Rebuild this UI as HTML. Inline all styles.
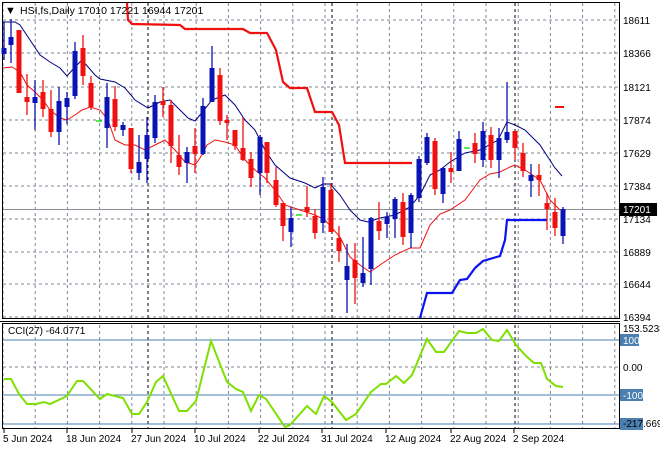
<!DOCTYPE html>
<html><head><meta charset="utf-8"><style>
html,body{margin:0;padding:0;background:#fff;width:660px;height:450px;overflow:hidden}
svg{display:block;font-family:"Liberation Sans",sans-serif}
</style></head><body>
<svg id="s" width="660" height="450" viewBox="0 0 660 450" xmlns="http://www.w3.org/2000/svg">
<rect width="660" height="450" fill="#fff"/>
<g id="grid"></g>
<g id="ind"></g>
<g id="cand"></g>
<g fill="#000" font-size="10">
<text x="5" y="14" font-size="11">&#9660;</text>
<text x="20" y="14" font-size="10.5" fill="#000">HSI,fs,Daily  17010 17221 16944 17201</text>
</g>
<g id="axis" font-size="10" fill="#000"></g>
</svg>
<script>
const NS="http://www.w3.org/2000/svg";
function el(p,t,a,txt){const e=document.createElementNS(NS,t);for(const k in a)e.setAttribute(k,a[k]);if(txt!==undefined)e.textContent=txt;document.getElementById(p).appendChild(e);return e;}
const gc="#7d8796";
// vertical grid
for(let x=3;x<620;x+=32.2){el("grid","line",{x1:x,y1:3,x2:x,y2:318,stroke:gc,"stroke-dasharray":"3,3"});el("grid","line",{x1:x,y1:325,x2:x,y2:428,stroke:gc,"stroke-dasharray":"3,3"});}
[148,332,515].forEach(x=>{el("grid","line",{x1:x,y1:3,x2:x,y2:318,stroke:"#000","stroke-dasharray":"3,3"});el("grid","line",{x1:x,y1:325,x2:x,y2:428,stroke:"#000","stroke-dasharray":"3,3"});});
const pr=[[18611,20],[18366,53],[18121,87],[17874,120],[17629,153],[17384,186],[17134,219],[16889,252],[16644,284],[16394,317]];
pr.forEach(p=>{el("grid","line",{x1:3,y1:p[1],x2:619,y2:p[1],stroke:gc,"stroke-dasharray":"3,3"});});
el("grid","line",{x1:3,y1:209.5,x2:619,y2:209.5,stroke:"#8a9098"});
el("grid","line",{x1:3,y1:367,x2:619,y2:367,stroke:gc,"stroke-dasharray":"3,3"});
[340,395,424].forEach(y=>el("grid","line",{x1:3,y1:y,x2:619,y2:y,stroke:"#4a7fb0"}));
// frames
el("grid","rect",{x:2.5,y:2.5,width:617,height:316,fill:"none",stroke:"#000"});
el("grid","rect",{x:2.5,y:323.5,width:617,height:105,fill:"none",stroke:"#000"});
el("grid","line",{x1:0,y1:321.5,x2:620,y2:321.5,stroke:"#000"});
// candles
const C=[[4,48,54,22,60,'b'],[11,37,45,19,63,'b'],[19,30,93,30,93,'r'],[27,97,102,74,115,'r'],[35,97,103,80,130,'b'],[43,92,109,80,117,'r'],[51,109,132,90,137,'r'],[59,101,132,87,145,'b'],[67,98,107,92,124,'b'],[75,51,96,42,99,'b'],[83,48,76,35,85,'r'],[91,83,107,76,110,'r'],[99,121,121,121,121,'g'],[107,97,128,83,148,'b'],[115,99,127,86,131,'r'],[123,125,130,122,136,'b'],[131,128,169,128,173,'r'],[139,162,173,135,180,'b'],[147,135,159,117,183,'b'],[155,102,138,95,143,'b'],[163,101,105,87,117,'r'],[171,105,146,100,163,'r'],[179,155,167,135,175,'r'],[187,152,163,147,183,'b'],[195,146,154,128,173,'r'],[203,106,154,98,155,'b'],[212,68,102,46,102,'b'],[220,75,121,68,125,'r'],[227,120,123,115,140,'r'],[235,130,146,130,150,'r'],[243,148,160,117,161,'r'],[251,159,178,152,187,'r'],[260,137,173,135,195,'b'],[267,142,173,142,183,'r'],[276,180,205,167,207,'r'],[283,203,226,203,241,'r'],[291,218,232,207,247,'b'],[299,215,215,215,215,'g'],[307,207,212,186,217,'r'],[315,216,233,209,239,'r'],[323,187,223,177,233,'b'],[331,190,232,183,232,'r'],[339,238,251,226,262,'r'],[347,266,280,244,313,'b'],[355,260,278,243,304,'r'],[363,273,283,237,287,'b'],[371,218,269,217,285,'b'],[379,221,231,202,240,'r'],[387,217,224,212,238,'b'],[395,199,219,197,238,'b'],[403,202,237,193,245,'r'],[411,195,233,193,248,'b'],[419,159,198,156,202,'b'],[427,137,163,133,165,'b'],[435,141,189,138,195,'r'],[443,168,194,167,203,'b'],[451,168,172,152,183,'r'],[459,139,171,131,171,'b'],[467,148,148,148,148,'g'],[475,143,154,133,163,'r'],[483,131,160,122,167,'b'],[491,135,160,127,168,'r'],[499,138,160,128,178,'b'],[507,132,140,82,143,'b'],[515,131,148,131,160,'r'],[523,153,171,143,177,'r'],[531,175,181,164,197,'b'],[539,175,180,164,196,'r'],[547,203,209,193,230,'r'],[555,212,228,198,236,'r'],[563,209,236,207,244,'b']];
C.forEach(c=>{const col=c[5]=='b'?'#0a14b4':c[5]=='r'?'#f01010':'#20e020';
if(c[5]=='g'){el("cand","line",{x1:c[0]-3,y1:c[1],x2:c[0]+3,y2:c[1],stroke:col,"stroke-width":1.5});return;}
el("cand","line",{x1:c[0],y1:c[3],x2:c[0],y2:c[4],stroke:col,"stroke-width":1.3});
el("cand","rect",{x:c[0]-2.5,y:c[1],width:5,height:Math.max(1.5,c[2]-c[1]),fill:col});});
el("cand","line",{x1:555,y1:107,x2:564,y2:107,stroke:"#f01010","stroke-width":2});
function pl(pts,st,w){el("ind","polyline",{points:pts.map(p=>p.join(",")).join(" "),fill:"none",stroke:st,"stroke-width":w});}
pl([[3,22],[15,22],[20,25],[30,40],[40,55],[50,62],[60,68],[67,76],[75,67],[82,60],[95,75],[100,79],[115,82],[125,88],[135,100],[148,108],[160,102],[170,100],[180,110],[188,118],[195,121],[200,115],[212,100],[225,95],[235,105],[245,120],[255,130],[265,150],[275,165],[290,178],[305,183],[315,188],[323,184],[330,184],[340,195],[350,210],[360,220],[368,222],[380,218],[395,215],[410,207],[420,195],[430,175],[440,170],[450,162],[465,153],[480,150],[498,140],[507,122],[515,125],[525,130],[540,145],[555,168],[562,176]],"#000080",1);
pl([[3,68],[12,67],[20,72],[27,85],[35,92],[43,100],[50,110],[60,118],[67,120],[75,115],[82,110],[90,107],[100,110],[108,120],[115,140],[125,145],[135,145],[145,150],[155,145],[165,140],[175,150],[185,162],[195,165],[200,158],[207,145],[215,140],[225,142],[235,145],[245,160],[255,170],[265,178],[275,190],[285,205],[300,210],[315,215],[325,220],[340,237],[350,257],[360,265],[370,272],[380,265],[395,255],[410,248],[420,248],[430,225],[440,214],[450,210],[465,200],[480,180],[490,174],[500,172],[510,167],[515,165],[525,170],[540,180],[550,200],[560,210]],"#f01010",1);
pl([[127,3],[128,20],[132,24],[180,25],[185,29],[243,29],[250,33],[267,33],[276,50],[283,82],[290,88],[307,88],[315,112],[332,112],[339,125],[345,163],[412,163]],"#f01010",2.2);
pl([[420,318],[427,293],[452,293],[460,280],[467,279],[475,268],[483,261],[500,256],[505,240],[507,220],[547,220]],"#0a14f0",2.2);
pl([[4,379],[11,379],[19,394],[27,404],[36,404],[44,402],[50,404],[67,396],[77,381],[83,381],[100,399],[107,394],[123,398],[132,414],[139,414],[147,402],[156,382],[163,376],[179,411],[187,411],[196,401],[211,341],[227,382],[236,389],[243,392],[251,411],[259,395],[266,399],[285,427],[290,425],[307,406],[316,414],[324,396],[332,402],[346,420],[356,414],[371,392],[381,384],[386,384],[396,376],[404,383],[412,375],[427,339],[436,352],[444,352],[459,331],[467,333],[476,333],[483,329],[492,340],[499,341],[507,330],[516,345],[526,356],[534,363],[541,363],[547,379],[556,386],[563,387]],"#7fe000",2);
// axis labels
pr.forEach(p=>el("axis","text",{x:623,y:p[1]+4},String(p[0])));
el("axis","rect",{x:620,y:203,width:37,height:13,fill:"#000"});
el("axis","text",{x:623,y:213,fill:"#fff"},"17201");
el("axis","text",{x:623,y:332},"153.5238");
el("axis","rect",{x:620,y:334,width:19,height:12,fill:"#4a7fb0"});
el("axis","text",{x:623,y:344,fill:"#fff"},"100");
el("axis","text",{x:623,y:371},"0.00");
el("axis","rect",{x:620,y:389,width:23,height:12,fill:"#4a7fb0"});
el("axis","text",{x:623,y:399,fill:"#fff"},"-100");
el("axis","rect",{x:620,y:418,width:23,height:12,fill:"#4a7fb0"});
el("axis","text",{x:623,y:427},"-217.669");
el("axis","text",{x:8,y:334},"CCI(27) -64.0771");
[[3,"5 Jun 2024"],[66,"18 Jun 2024"],[131,"27 Jun 2024"],[194,"10 Jul 2024"],[258,"22 Jul 2024"],[321,"31 Jul 2024"],[385,"12 Aug 2024"],[450,"22 Aug 2024"],[513,"2 Sep 2024"]].forEach(d=>{el("axis","text",{x:d[0],y:442},d[1]);el("grid","line",{x1:d[0]+1,y1:429,x2:d[0]+1,y2:433,stroke:"#000"});});
</script>
</body></html>
